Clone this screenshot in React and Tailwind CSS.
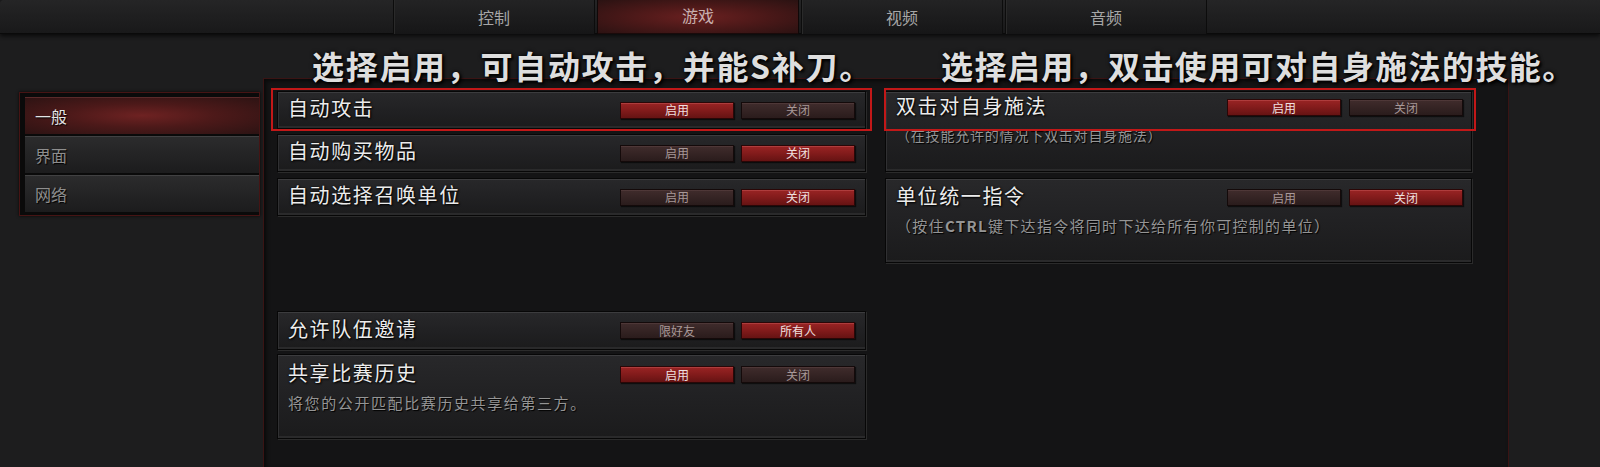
import React from "react";

const FONT = "font-['Noto_Sans_CJK_SC','Noto_Sans',sans-serif]";

function Btn({ label, active }) {
  return (
    <div
      className={
        active
          ? "w-[114px] h-[17px] flex items-center justify-center text-[12px] leading-none text-[#f0e0e0] bg-gradient-to-b from-[#9a2424] via-[#821b1b] to-[#661313] border border-[#2a0707] shadow-[inset_0_1px_0_rgba(255,150,150,0.22),1px_1px_1px_rgba(0,0,0,0.6)]"
          : "w-[114px] h-[17px] flex items-center justify-center text-[12px] leading-none text-[#a89898] bg-gradient-to-b from-[#402c2c] via-[#352424] to-[#2a1c1c] border border-[#140a0a] shadow-[inset_0_1px_0_rgba(255,200,200,0.08),1px_1px_1px_rgba(0,0,0,0.6)]"
      }
    >
      {label}
    </div>
  );
}

function Row({ title, options, active, desc, h, headH, gap = "gap-[7px]", pr = "pr-[10px]", pl = "pl-[10px]", descPt = "pt-[4px]", descCls = "text-[14px] tracking-[0.8px]" }) {
  return (
    <div
      className={`relative border border-[#070707] bg-gradient-to-b from-[#28282a] via-[#212123] to-[#1b1b1c] shadow-[inset_0_1px_0_#3c3c3e,inset_1px_0_0_#303032,inset_0_-2px_0_#2a2a2b,1px_1px_0_#2b2b2b] ${h}`}
    >
      <div className={`flex items-center justify-between ${pl} ${pr} ${headH}`}>
        <div className="relative -top-[2px] text-[20px] leading-none text-[#ececec] [text-shadow:1px_1px_2px_#000,0_0_2px_#000] tracking-[1.6px]">
          {title}
        </div>
        <div className={`flex ${gap}`}>
          <Btn label={options[0]} active={active === 0} />
          <Btn label={options[1]} active={active === 1} />
        </div>
      </div>
      {desc && (
        <div className={`${pl} ${descPt} ${descCls} leading-none text-[#959595] [text-shadow:1px_1px_1px_#000]`}>
          {desc}
        </div>
      )}
    </div>
  );
}

function Tab({ label, active }) {
  return (
    <div
      className={
        active
          ? "w-[202px] h-[34px] flex justify-center pt-[3px] text-[16px] text-[#c8b0b0] bg-[radial-gradient(ellipse_at_center,#6a2020_0%,#4a1818_50%,#2a1212_100%)] border-x border-[#100808] shadow-[inset_0_-1px_0_#1a0a0a]"
          : "w-[202px] h-[34px] flex items-center justify-center text-[16px] text-[#a6a6a6] bg-gradient-to-b from-[#232324] to-[#161617] border-x border-[#0c0c0c] shadow-[inset_1px_0_0_#2a2a2a]"
      }
    >
      {label}
    </div>
  );
}

function SideItem({ label, active }) {
  return (
    <div
      className={
        active
          ? "h-[37px] flex items-center pl-[10px] text-[16px] text-[#e4e4e4] bg-[radial-gradient(ellipse_at_center,#6e2222_0%,#4c1919_45%,#2c1313_100%)] shadow-[inset_0_1px_0_#5a2a2a] [text-shadow:1px_1px_1px_#000]"
          : "h-[37px] flex items-center pl-[10px] text-[16px] text-[#8e8e8e] bg-gradient-to-b from-[#2c2c2d] to-[#1c1c1d] shadow-[inset_0_1px_0_#414142] [text-shadow:1px_1px_1px_#000]"
      }
    >
      {label}
    </div>
  );
}

export default function App() {
  return (
    <div className={`w-[1600px] h-[467px] relative overflow-hidden bg-[#1d1d1e] ${FONT}`}>
      {/* top bar */}
      <div className="h-[34px] flex bg-gradient-to-b from-[#252526] to-[#19191a] border-b border-[#0a0a0a] shadow-[0_2px_4px_rgba(0,0,0,0.7)] rounded-tl-[4px]">
        <div className="w-[393px]" />
        <div className="flex gap-[2px]">
          <Tab label="控制" />
          <Tab label="游戏" active />
          <Tab label="视频" />
          <Tab label="音频" />
        </div>
      </div>

      {/* body */}
      <div className="flex h-[433px]">
        <div className="w-[263px] pt-[58px] pl-[19px]">
          <div className="w-[241px] border border-[#461414] bg-[#0a0a0a] pl-[5px] pt-[4px] pb-[3px] flex flex-col gap-[2px] shadow-[0_0_3px_rgba(0,0,0,0.8)]">
            <SideItem label="一般" active />
            <SideItem label="界面" />
            <SideItem label="网络" />
          </div>
        </div>

        <div className="mt-[44px] w-[1246px] bg-[#141415] border-l border-t border-r border-[#3a1414] pt-[12px] pl-[13px] flex gap-[19px] shadow-[inset_2px_2px_4px_rgba(0,0,0,0.6)]">
          {/* left column */}
          <div className="w-[589px] flex flex-col">
            <Row title="自动攻击" options={["启用", "关闭"]} active={0} h="h-[38px]" headH="h-[36px]" />
            <div className="h-[5px]" />
            <Row title="自动购买物品" options={["启用", "关闭"]} active={1} h="h-[38px]" headH="h-[36px]" />
            <div className="h-[6px]" />
            <Row title="自动选择召唤单位" options={["启用", "关闭"]} active={1} h="h-[38px]" headH="h-[36px]" />
            <div className="h-[95px]" />
            <Row title="允许队伍邀请" options={["限好友", "所有人"]} active={1} h="h-[39px]" headH="h-[37px]" />
            <div className="h-[4px]" />
            <Row
              title="共享比赛历史"
              options={["启用", "关闭"]}
              active={0}
              h="h-[85px]"
              headH="h-[38px] pt-[1px]"
              desc="将您的公开匹配比赛历史共享给第三方。"
              descPt="pt-[2px]"
              descCls="text-[15px] tracking-[1.6px]"
            />
          </div>

          {/* right column */}
          <div className="w-[587px] flex flex-col gap-[6px]">
            <Row
              title="双击对自身施法"
              options={["启用", "关闭"]}
              active={0}
              h="h-[81px]"
              headH="h-[31px]"
              gap="gap-[8px]"
              pr="pr-[8px]"
              desc="（在技能允许的情况下双击对自身施法）"
              descPt="pt-[5px]"
            />
            <Row
              title="单位统一指令"
              options={["启用", "关闭"]}
              active={1}
              h="h-[85px]"
              headH="h-[37px]"
              gap="gap-[8px]"
              pr="pr-[8px]"
              desc={
                <span>
                  （按住<b className="font-bold">CTRL</b>键下达指令将同时下达给所有你可控制的单位）
                </span>
              }
              descPt="pt-[2px]"
              descCls="text-[15px] tracking-[1.3px]"
            />
          </div>
        </div>
      </div>

      {/* annotations (overlay) */}
      <div className="absolute left-[312px] top-[49px] text-[32px] leading-none font-bold tracking-[1.7px] text-[#dedede] [text-shadow:2px_2px_3px_#000,0_0_4px_#000] whitespace-nowrap">
        选择启用，可自动攻击，并能S补刀。
      </div>
      <div className="absolute left-[941px] top-[49px] text-[32px] leading-none font-bold tracking-[1.4px] text-[#dedede] [text-shadow:2px_2px_3px_#000,0_0_4px_#000] whitespace-nowrap">
        选择启用，双击使用可对自身施法的技能。
      </div>

      {/* red highlight boxes (overlay) */}
      <div className="absolute left-[271px] top-[88px] w-[601px] h-[43px] border-2 border-[#c21818]" />
      <div className="absolute left-[884px] top-[88px] w-[592px] h-[43px] border-2 border-[#c21818]" />
    </div>
  );
}
